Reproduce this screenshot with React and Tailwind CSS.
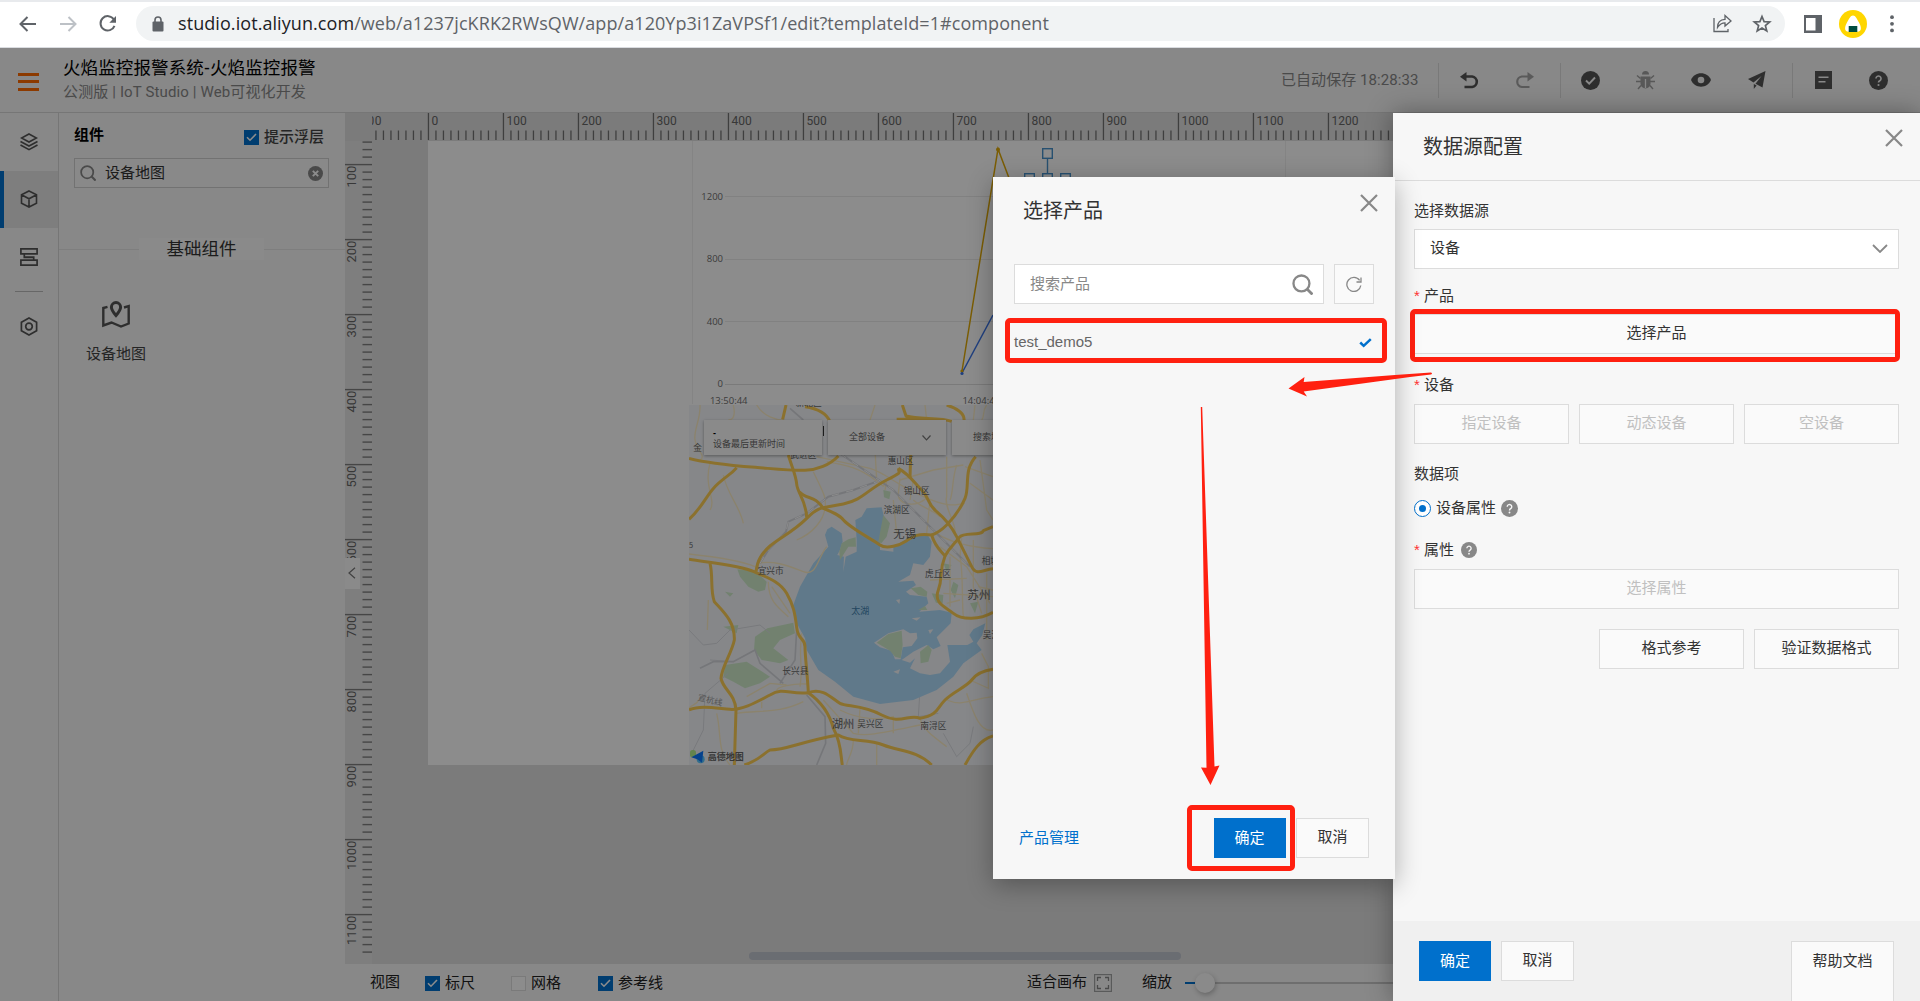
import React from "react";

const UI = "font-['Liberation_Sans','Noto_Sans_CJK_SC',sans-serif]";

/* ---------- icons ---------- */
function Close({ className = "" }) {
  return (
    <svg className={className} width="18" height="18" viewBox="0 0 18 18" fill="none" stroke="#888" strokeWidth="2.200">
      <path d="M1 1l16 16M17 1L1 17" />
    </svg>
  );
}

function Search({ size = 16, width = 1.8, color = "#888" }) {
  return (
    <svg width={size} height={size} viewBox="0 0 20 20" fill="none" stroke={color} strokeWidth={width}>
      <circle cx="9" cy="9" r="7.6" />
      <path d="M14.5 14.5L19.5 19.5" strokeWidth={width * 1.2} />
    </svg>
  );
}

function Question({ size = 17, bg = "#888", fg = "#f7f7f7" }) {
  return (
    <svg className="shrink-0" width={size} height={size} viewBox="0 0 18 18" fill="none">
      <circle cx="9" cy="9" r="9" fill={bg} />
      <path d="M6.6 7.1a2.4 2.4 0 1 1 3.6 2.1c-.9.5-1.2.9-1.2 1.8" stroke={fg} strokeWidth="1.5" />
      <circle cx="9" cy="13.2" r="1" fill={fg} />
    </svg>
  );
}

function Check({ checked }) {
  return checked ? (
    <span className="flex size-[15px] shrink-0 items-center justify-center bg-[#0070cc]">
      <svg width="11" height="9" viewBox="0 0 11 9" fill="none" stroke="#fff" strokeWidth="1.6">
        <path d="M1 4.2L4 7.2L10 1" />
      </svg>
    </span>
  ) : (
    <span className="size-[15px] shrink-0 border border-[#dedede] bg-white" />
  );
}

/* ---------- browser bar ---------- */
function BrowserBar() {
  return (
    <div className="flex h-12 shrink-0 items-center border-b border-[#dadce0] bg-white shadow-[inset_0_2px_0_#e8eaed]">
      <div className="flex w-[136px] items-center pl-[18px]">
        <svg width="100" height="20" viewBox="0 0 100 20" fill="none" strokeWidth="2" stroke="#5f6368">
          <path d="M18 10H3M9.5 3L2.5 10L9.5 17" />
          <path d="M42 10H57M50.5 3L57.500 10L50.500 17" stroke="#bdc1c6" />
          <path d="M95.800 5.400A7.200 7.200 0 1 0 96.500 11.800" />
          <path d="M98 2V8.700H91.300Z" fill="#5f6368" stroke="none" />
        </svg>
      </div>
      <div className="flex h-[35px] w-[1649px] items-center rounded-full bg-[#f1f3f4] pl-4">
        <svg width="12" height="16" viewBox="0 0 12 16">
          <rect x="0.500" y="5.500" width="11" height="10" rx="1" fill="#5f6368" />
          <path d="M3 6V4a3 3 0 0 1 6 0v2" fill="none" stroke="#5f6368" strokeWidth="1.600" />
        </svg>
        <div className="ml-[14px] w-[1500px] whitespace-nowrap font-['Open_Sans','Noto_Sans',sans-serif] text-[18px] tracking-[0.07px] text-[#5f6368]">
          <span className="text-[#202124]">studio.iot.aliyun.com</span>
          /web/a1237jcKRK2RWsQW/app/a120Yp3i1ZaVPSf1/edit?templateId=1#component
        </div>
        <svg className="ml-[35px]" width="19" height="19" viewBox="0 0 19 19" fill="none" stroke="#5f6368" strokeWidth="1.300">
          <path d="M1 4V17.500H15V15" />
          <path d="M4.500 13.500C4.500 8.500 7 5.500 12 5.300V1.500L18 7L12 12V8.800C8.500 8.800 6.500 10.500 4.500 13.500Z" />
        </svg>
        <svg className="ml-5" width="20" height="20" viewBox="0 0 20 20" fill="none" stroke="#5f6368" strokeWidth="1.700">
          <path d="M10 2.500L12.100 7.600L17.700 8L13.400 11.600L14.800 17L10 14L5.200 17L6.600 11.600L2.300 8L7.900 7.600Z" />
        </svg>
      </div>
      <svg className="ml-[19px]" width="18" height="18" viewBox="0 0 18 18">
        <path d="M0 0H18V18H0ZM2 3V15.500H11.500V3Z" fill="#5f6368" fillRule="evenodd" />
      </svg>
      <svg className="ml-[17px]" width="28" height="28" viewBox="0 0 28 28">
        <circle cx="14" cy="14" r="14" fill="#ffd600" />
        <path d="M14 5.500C16.500 5.500 18 9 20 12.500C22.500 17 23 21.500 18.500 21.800H9.500C5 21.500 5.500 17 8 12.500C10 9 11.500 5.500 14 5.500Z" fill="#fff" />
        <rect x="9.700" y="16" width="8.600" height="6" fill="#004d40" />
      </svg>
      <svg className="ml-[23px]" width="4" height="18" viewBox="0 0 4 18" fill="#5f6368">
        <circle cx="2" cy="2.200" r="1.900" />
        <circle cx="2" cy="8.800" r="1.900" />
        <circle cx="2" cy="15.400" r="1.900" />
      </svg>
    </div>
  );
}

/* ---------- application header ---------- */
const Divider = ({ className = "" }) => <div className={"h-[35px] w-px shrink-0 bg-[#dcdcdc] " + className} />;

function Header() {
  return (
    <div className="flex h-[65px] shrink-0 items-center border-b border-[#d8d8d8] bg-[#f7f7f7]">
      <div className="ml-[18px] mt-[3px] flex w-[21px] flex-col gap-[4.500px]">
        <div className="h-[3px] bg-[#ff6a00]" />
        <div className="h-[3px] bg-[#ff6a00]" />
        <div className="h-[3px] bg-[#ff6a00]" />
      </div>
      <div className="ml-6 flex flex-col">
        <div className="h-[24px] text-[17.5px] leading-[24px] tracking-[0.12px] text-black">火焰监控报警系统-火焰监控报警</div>
        <div className="h-[24px] whitespace-nowrap font-['Roboto','Noto_Sans_CJK_SC',sans-serif] text-[15px] leading-[24px] tracking-[0.13px] text-[#888]">
          公测版 | IoT Studio | Web可视化开发
        </div>
      </div>
      <div className="ml-auto flex h-full items-center pr-8">
        <div className="w-[157px] whitespace-nowrap font-['Roboto','Noto_Sans_CJK_SC',sans-serif] text-[15px] tracking-[0.06px] text-[#888]">
          已自动保存 18:28:33
        </div>
        <Divider />
        <svg className="ml-[21px]" width="19" height="17" viewBox="0 0 19 17" fill="none">
          <path d="M6 4.500H12.200A5.300 5.300 0 0 1 12.200 15H4.500" stroke="#555" strokeWidth="2.600" />
          <path d="M0 4.700L6.500 0V9.400Z" fill="#555" />
        </svg>
        <svg className="ml-9" width="19" height="17" viewBox="0 0 19 17" fill="none">
          <path d="M13 4.500H6.800A5.300 5.300 0 0 0 6.800 15H14.500" stroke="#a5a5a5" strokeWidth="2.200" />
          <path d="M19 4.700L12.500 0V9.400Z" fill="#a5a5a5" />
        </svg>
        <Divider className="ml-[26px]" />
        <svg className="ml-[20px]" width="19" height="19" viewBox="0 0 19 19" fill="none">
          <circle cx="9.500" cy="9.500" r="9.500" fill="#555" />
          <path d="M5 9.500L8.200 12.700L14 6.500" stroke="#f7f7f7" strokeWidth="1.900" />
        </svg>
        <svg className="ml-9" width="19" height="19" viewBox="0 0 19 19" fill="#a0a0a0" stroke="#a0a0a0">
          <path d="M6 3.500a3.500 3.500 0 0 1 7 0z" stroke="none" />
          <path d="M4.500 5.500h10v7a5 5 0 0 1-10 0z" stroke="none" />
          <path d="M1 4.500L4.500 7.500M18 4.500L14.500 7.500M0 10.500H5M14 10.500H19M2 18L5 14.500M17 18L14 14.500" fill="none" strokeWidth="1.400" />
          <path d="M9.500 8V17" stroke="#f7f7f7" strokeWidth="1.300" />
        </svg>
        <svg className="ml-9" width="20" height="14" viewBox="0 0 20 14">
          <path d="M0 7C2 2.500 5.500 0.300 10 0.300S18 2.500 20 7C18 11.500 14.500 13.700 10 13.700S2 11.500 0 7Z" fill="#555" />
          <circle cx="10" cy="7" r="3.300" fill="#f7f7f7" />
        </svg>
        <svg className="ml-[37px]" width="18" height="18" viewBox="0 0 18 18" fill="#555">
          <path d="M17.500 0L0 8L5.500 11.500L13.500 5L7.500 12.800L14.500 16.500Z" />
          <path d="M5.800 13V18L8.600 14.600Z" />
        </svg>
        <Divider className="ml-[26px]" />
        <svg className="ml-[22px]" width="17" height="18" viewBox="0 0 17 18">
          <rect width="17" height="18" fill="#555" />
          <path d="M3.500 6.300H13.500M3.500 10.700H10.500" stroke="#f7f7f7" strokeWidth="1.500" />
        </svg>
        <div className="ml-[37px]">
          <Question size={19} bg="#555" />
        </div>
      </div>
    </div>
  );
}

/* ---------- left navigation ---------- */
function NavRail() {
  return (
    <div className="flex w-[59px] shrink-0 flex-col border-r border-[#d8d8d8] bg-[#f7f7f7]">
      <div className="flex h-[58px] items-center justify-center">
        <svg width="18" height="18" viewBox="0 0 18 18" fill="none" stroke="#555" strokeWidth="1.600">
          <path d="M9 1L16.500 5L9 9L1.500 5Z" />
          <path d="M0.500 8.500L9 13L17.500 8.500M0.500 12L9 16.700L17.500 12" />
        </svg>
      </div>
      <div className="flex h-[57px] items-center justify-center border-l-4 border-[#0070cc] bg-[#e6e6e6] pb-0.5 pr-1">
        <svg width="18" height="18" viewBox="0 0 18 18" fill="none" stroke="#555" strokeWidth="1.600">
          <path d="M9 1L16.500 4.800V13.200L9 17L1.500 13.200V4.800ZM1.500 4.800L9 8.800L16.500 4.800M9 8.800V17" />
        </svg>
      </div>
      <div className="flex h-[58px] items-center justify-center">
        <svg width="18" height="18" viewBox="0 0 18 18" fill="none" stroke="#555" strokeWidth="1.700">
          <path d="M0.900 0.900H17.100V5.800H0.900ZM4.300 5.800V9.400H13.500M0.900 12.200H17.100V17.100H0.900ZM4.300 9H13.700V12.200" />
        </svg>
      </div>
      <div className="mx-auto mt-[5px] h-px w-7 bg-[#bcbcbc]" />
      <div className="mt-[25px] flex justify-center">
        <svg width="18" height="20" viewBox="0 0 18 20" fill="none" stroke="#555" strokeWidth="1.700">
          <path d="M9 1L16.600 5.200V13.800L9 18L1.400 13.800V5.200Z" />
          <circle cx="9" cy="9.500" r="3.300" />
        </svg>
      </div>
    </div>
  );
}

function ComponentPanel() {
  return (
    <div className="flex w-[286px] shrink-0 flex-col bg-[#f7f7f7] text-[15px] text-[#444]">
      <div className="flex h-[45px] items-center pl-[15px] pr-[21px]">
        <span className="font-bold text-black">组件</span>
        <span className="ml-auto mt-[3px] flex items-center gap-[5px] font-medium">
          <Check checked />
          提示浮层
        </span>
      </div>
      <div className="ml-[15px] flex h-[30px] w-[255px] items-center border border-[#d0d0d0] bg-[#fafafa] pl-[5px] pr-[5px] text-[#333]">
        <Search size={16} color="#888" width={2.200} />
        <span className="ml-[9px]">设备地图</span>
        <svg className="ml-auto" width="15" height="15" viewBox="0 0 15 15">
          <circle cx="7.500" cy="7.500" r="7.500" fill="#888" />
          <path d="M4.800 4.800L10.200 10.200M10.200 4.800L4.800 10.200" stroke="#fff" strokeWidth="1.900" />
        </svg>
      </div>
      <div className="mt-[50px] flex items-center">
        <div className="h-px w-20 bg-[#e6e6e6]" />
        <div className="flex h-[22px] w-[125px] items-center justify-center bg-[#fbfbfb] text-[17.5px] text-[#333]">基础组件</div>
        <div className="h-px flex-1 bg-[#e6e6e6]" />
      </div>
      <div className="mt-[41px] flex w-[114px] flex-col items-center">
        <svg width="28" height="28" viewBox="0 0 28 28" fill="none" stroke="#555" strokeWidth="2.400">
          <path d="M5.500 5.800L1.300 7V24.500L9.500 21.500L19 25.500L26.700 22.500V5.200L22 6.500" />
          <path d="M14 1.600A4.600 4.600 0 0 1 18.600 6.200C18.600 9 14 14.500 14 14.500S9.400 9 9.400 6.200A4.600 4.600 0 0 1 14 1.600Z" strokeWidth="3" />
        </svg>
        <span className="mt-[14px]">设备地图</span>
      </div>
    </div>
  );
}

/* ---------- rulers ---------- */
function TopRuler() {
  const ticks = Array.from({ length: 137 }, (_, i) => i - 7);
  return (
    <svg className="block" width="1021" height="28" viewBox="372 0 1021 28">
      {ticks.map((i) => (
        <rect key={i} x={427.800 + i * 7.500} y={i % 10 === 0 ? 0 : 17.500} width="1.300" height={i % 10 === 0 ? 27 : 9.500} fill="#747474" />
      ))}
      {Array.from({ length: 14 }, (_, i) => i - 1).map((n) => (
        <text key={n} x={n < 0 ? 356.500 : 431.500 + n * 75} y="12.300" fontSize="12" fill="#666" textLength={n < 0 ? 25 : undefined} className="font-['Roboto',sans-serif]">
          {n * 100}
        </text>
      ))}
    </svg>
  );
}

function SideRuler() {
  const ticks = Array.from({ length: 109 }, (_, i) => i + 7);
  return (
    <svg className="block" width="27" height="824" viewBox="345 141 27 824">
      {ticks.map((i) => (
        <rect key={i} x={i % 10 === 0 ? 345 : 362.500} y={88.900 + i * 7.500} width={i % 10 === 0 ? 27 : 9.500} height="1.400" fill="#808080" />
      ))}
      {Array.from({ length: 11 }, (_, i) => i + 1).map((n) => (
        <text key={n} transform={`translate(356.400 ${90.700 + n * 75}) rotate(-90)`} textAnchor="end" fontSize="13" fill="#666" className="font-['Roboto',sans-serif]">
          {n * 100}
        </text>
      ))}
    </svg>
  );
}

/* ---------- map ---------- */
const LABELS = [
  ["惠山区", 623, 193, 26], ["锡山区", 671, 281, 26], ["滨湖区", 611, 339, 26], ["无锡", 640, 415, 34],
  ["宜兴市", 233, 521, 26], ["虎丘区", 735, 530, 26], ["相城区", 905, 493, 26], ["苏州", 862, 596, 35],
  ["吴江区", 908, 713, 26], ["长兴县", 307, 821, 26], ["湖州", 455, 985, 34], ["吴兴区", 532, 982, 26],
  ["南浔区", 721, 988, 26], ["金", 40, 154, 26], ["武进区", 331, 173, 26], ["新北区", 347, 19, 26],
];

const MAJOR = [
  "M27 175C90 192 180 198 250 204S340 212 375 211S450 195 475 168",
  "M27 358C70 320 80 280 115 250S150 225 170 203",
  "M325 165C335 200 348 225 350 252S378 300 380 352",
  "M27 478C90 488 180 496 222 515S300 545 320 580S345 640 350 682S375 712 375 740S382 820 385 878",
  "M228 515C232 480 245 460 270 438S340 395 380 355S430 325 490 312S560 270 620 240S650 220 657 206",
  "M358 275C380 300 405 285 430 325C455 335 480 345 492 362C520 390 580 420 600 435S660 435 680 422S710 400 755 405C765 440 780 450 795 468C775 520 790 530 775 570S795 620 820 640S900 660 939 637",
  "M655 205C690 225 700 245 725 270S740 310 770 335S815 380 830 410S860 470 875 500S910 508 939 506",
  "M692 165L690 235",
  "M887 170C850 210 870 260 855 295S815 360 800 375S770 400 755 405",
  "M795 468C810 440 825 430 838 412S905 410 910 392L939 380",
  "M90 490C100 530 90 570 103 605C130 635 165 665 163 720C155 760 125 800 123 835C130 870 165 880 168 930L163 1095",
  "M27 930C60 915 110 925 150 928S240 900 270 885C310 860 330 885 385 878C430 910 450 945 460 985C485 1030 482 1070 487 1095",
  "M385 878C430 860 460 900 480 910S550 915 605 945S690 940 720 955C775 945 770 925 795 900S860 860 875 840S910 812 939 808",
  "M193 1095C240 1080 250 1060 270 1050C320 1050 360 1025 475 1005C510 1028 560 1015 610 1035S710 1050 755 1095",
  "M855 1095C880 1050 900 1020 939 1008",
  "M318 15L308 58M375 20C410 25 440 40 450 65M667 15L678 48C720 60 780 50 815 64M800 15C830 25 855 40 852 62M650 58H760",
];

const MINOR = [
  "M27 462C100 470 180 480 225 500", "M60 15C62 60 40 90 45 120S80 170 60 180", "M160 15C170 60 150 60 145 60M230 15C250 50 290 60 310 60",
  "M90 190C70 260 110 300 90 330", "M130 225C140 280 180 320 190 370", "M230 490C290 480 330 500 370 515S410 480 440 440",
  "M400 215C430 280 440 290 435 325S400 400 350 420", "M440 185C500 195 540 205 585 240S600 250 620 245", "M410 170L570 205C620 220 640 250 730 290S830 310 855 310",
  "M620 245L615 270M640 300L650 400M660 235L655 280C650 310 700 330 745 290M700 240L690 300",
  "M800 170V290C790 320 830 370 825 400M855 200L939 230M870 250L939 300M900 180L920 330L939 360M830 195C815 240 820 280 810 300",
  "M770 400C800 420 850 440 939 446M845 415L840 470C850 520 845 600 850 650M880 420V560L905 640M780 440L860 500L930 610",
  "M750 540L860 535M790 580L939 590M800 610L840 600M920 520V720M895 560L939 570M810 470V620",
  "M265 545C265 600 290 620 325 650M275 560L330 640M365 700C355 780 370 800 360 860",
  "M170 940C240 930 300 940 370 905M110 940C125 1000 110 1050 150 1095M290 872C290 860 340 850 380 852M245 905V925M60 895C50 915 35 915 27 925",
  "M430 900L520 1000C560 1010 600 1000 720 975M480 930C540 960 600 960 640 950V1000M540 925L535 1000M590 1030V1095M520 1020C520 1060 500 1080 500 1095",
  "M720 955C730 990 760 1010 800 1040M800 900C850 920 860 900 939 890M860 880C880 940 900 1000 939 990M870 840L925 865V800L905 760",
  "M570 60L585 15M590 240L580 60M740 60L735 15M880 60L885 15M920 15C905 35 915 50 905 60M700 300C720 320 760 330 780 350M750 300L740 400",
  "M85 600L82 690M200 890L270 850L320 855M660 240L760 210L850 195",
];

function MapView() {
  return (
    <svg className="absolute inset-0" width="304" height="360" viewBox="27 15 912 1080" fill="none">
      <rect x="27" y="15" width="912" height="1080" fill="#f4f6fa" />
      <g fill="#cfeccb">
        <path d="M172 508L225 512L260 545L255 570L235 575L205 560L180 530Z" />
        <path d="M225 710L262 685L340 668L345 700L300 720L280 745L325 780L300 790L245 780L222 750Z" />
        <path d="M135 795L200 785L270 830L240 850L195 865L160 845L130 830Z" />
        <path d="M130 680L175 675L170 700ZM135 575L160 580L150 590ZM610 270L632 275L628 298L612 292Z" />
        <path d="M790 490L815 495L800 515ZM820 545L835 555L825 595L812 570ZM755 580L790 585L788 610L768 608ZM870 610L895 605L885 640Z" />
      </g>
      <g stroke="#dcdee3" strokeWidth="3">
        <path d="M27 690L70 735L110 730L150 690L240 675L270 700M225 750L160 785L90 780M145 820L75 880L70 990L35 1060M720 870L715 950L775 940M790 1000L830 1070L870 1030L880 980" />
      </g>
      <path d="M435 405L442 388L455 380L485 400L488 425L480 450L472 465L492 470L490 515L497 470L530 455L530 420L526 360L545 350L560 325L605 322L612 350L600 410L600 450L640 455L640 440L700 405L740 400L755 425L750 470L730 495L700 490L690 525L655 545L700 542L708 555L678 575L690 585L740 590L745 610L718 635L780 630L815 638L812 670L770 712L782 738L760 748L740 735L700 755L665 780L690 788L705 775L690 805L720 820L750 825L780 820L810 785L802 735L862 735L880 725L868 705L880 688L916 670L907 705L890 730L905 750L850 790L820 830L770 870L700 900L600 912L520 890L465 845L415 810L380 750L375 715L350 670L338 620L360 560L400 490L445 440Z" fill="#b0ddfb" />
      <path d="M582 728L625 700L670 688L690 700L710 698L712 715L695 738L668 742L662 778L645 778L635 752L600 742Z" fill="#f4f6fa" />
      <g fill="#cfeccb">
        <path d="M590 728L625 702L665 692L668 735L662 775L645 770L630 752Z" />
        <path d="M720 755L745 735L755 750L745 785L722 790Z" />
        <path d="M478 455L485 430L505 418L527 412L528 440L505 440L480 480ZM610 345L630 370L620 410L604 430L595 425Z" />
        <path d="M692 565L722 560L742 575L740 590L715 585ZM715 630L735 618L742 630Z" />
      </g>
      <path d="M648 600L660 598L658 612ZM745 690L760 688L750 702ZM695 655L722 652L710 662ZM640 815L660 808L655 822Z" fill="#f4f6fa" />
      <g stroke="#fdeec6" strokeWidth="4">
        {MINOR.map((d) => <path key={d} d={d} />)}
      </g>
      <g stroke="#d6d8dd" strokeWidth="6">
        <path d="M480 160L640 270L760 390L870 500M240 490L265 450L318 395L325 365L380 340L445 290L520 270L590 245" />
        <path d="M60 805L100 785L160 785L225 750L240 790L310 850M380 885L435 950L437 1030L410 1095M350 690L345 780L300 850M330 25L370 60" strokeWidth="5" />
      </g>
      <g stroke="#fff" strokeWidth="3" strokeDasharray="22 22">
        <path d="M480 160L640 270L760 390L870 500M240 490L265 450L318 395L325 365L380 340L445 290L520 270L590 245" />
      </g>
      <g stroke="#fdce55" strokeWidth="9" strokeLinejoin="round">
        {MAJOR.map((d) => <path key={d} d={d} />)}
      </g>
      <g fill="#666" className="font-['Noto_Sans_CJK_SC',sans-serif]">
        {LABELS.map(([t, x, y, s]) => (
          <text key={t} x={x} y={y} fontSize={s}>{t}</text>
        ))}
        <text x="27" y="443" fontSize="22">5</text>
        <text x="514" y="643" fontSize="27" fill="#3f7fae">太湖</text>
        <text transform="translate(52 900) rotate(14)" fontSize="25" fill="#999">宣杭线</text>
      </g>
      <rect x="30" y="1050" width="18" height="22" rx="8" fill="#b4f08c" />
      <circle cx="62" cy="1078" r="12" fill="#5cc8ff" />
      <path d="M34 1072L70 1052L66 1088L52 1078Z" fill="#0a78ff" />
      <text x="83" y="1081" fontSize="27" fontWeight="700" fill="#666" className="font-['Noto_Sans_CJK_SC',sans-serif]">高德地图</text>
    </svg>
  );
}

function MapWidget() {
  return (
    <div className="absolute left-[261px] top-[264px] h-[360px] w-[304px] overflow-hidden">
      <MapView />
      <div className="relative flex gap-[6.500px] pl-[15px] pt-[15px] text-[9px] text-[#666]">
        <div className="flex h-[35px] w-[117.500px] shrink-0 flex-col justify-center bg-[#fbfbfb] pl-[9px] pt-0.5 leading-[11px] shadow-[0_1px_3px_rgba(0,0,0,0.35)]">
          <div className="font-bold text-black">-</div>
          <div>设备最后更新时间</div>
        </div>
        <div className="flex h-[35px] w-[117.500px] shrink-0 items-center bg-[#fbfbfb] pl-[21px] pt-px shadow-[0_1px_3px_rgba(0,0,0,0.35)]">
          全部设备
          <svg className="ml-[37px]" width="9" height="6" viewBox="0 0 9 6" fill="none" stroke="#777" strokeWidth="1.200"><path d="M0.500 0.500L4.500 4.800L8.500 0.500" /></svg>
        </div>
        <div className="flex h-[35px] w-[117.500px] shrink-0 items-center bg-[#fbfbfb] pl-[21px] shadow-[0_1px_3px_rgba(0,0,0,0.35)]">搜索地点</div>
      </div>
      <div className="absolute left-[133.500px] top-[21px] h-[10px] w-px bg-[#333]" />
    </div>
  );
}

function ChartWidget() {
  return (
    <svg className="absolute left-[261px] top-0" width="704" height="270" viewBox="689 141 704 270" fill="none">
      <path d="M692.500 141V404M1285.500 141V404" stroke="#f0f0f0" />
      <path d="M725 196.500H993M725 259.500H993M725 321.500H993" stroke="#ececec" />
      <path d="M725 384.500H993" stroke="#dedede" />
      <g fontSize="9.500" fill="#707070" textAnchor="end" className="font-['Open_Sans',sans-serif]">
        <text x="723" y="199.500">1200</text>
        <text x="723" y="262">800</text>
        <text x="723" y="324.500">400</text>
        <text x="723" y="387">0</text>
        <text x="747.500" y="403.500">13:50:44</text>
        <text x="1000" y="403.500">14:04:44</text>
      </g>
      <path d="M962 373L993 315" stroke="#3a74e8" strokeWidth="1.500" />
      <path d="M962 371L998 149L1009 178" stroke="#e0aa08" strokeWidth="1.500" />
      <circle cx="962" cy="371" r="1.600" fill="#e0aa08" />
      <circle cx="962" cy="373.500" r="1.600" fill="#3a74e8" />
      <circle cx="998" cy="149.500" r="2" fill="#e0aa08" />
      <g stroke="#4893cc" strokeWidth="1.400" fill="#fff">
        <path d="M1047.500 158V174" />
        <rect x="1042.700" y="148.700" width="9.600" height="9.600" />
        <rect x="1024.700" y="173.700" width="9.600" height="9.600" />
        <rect x="1042.700" y="173.700" width="9.600" height="9.600" />
        <rect x="1060.700" y="173.700" width="9.600" height="9.600" />
      </g>
    </svg>
  );
}

function BottomBar() {
  return (
    <div className="flex h-[37px] shrink-0 items-center bg-[#f7f7f7] pl-[25px] text-[15px] text-[#222]">
      <span className="w-[55px]">视图</span>
      <span className="flex w-[86px] items-center gap-[5px] pt-0.5"><Check checked />标尺</span>
      <span className="flex w-[87px] items-center gap-[5px] pt-0.5"><Check />网格</span>
      <span className="flex items-center gap-[5px] pt-0.5"><Check checked />参考线</span>
      <span className="ml-[364px] flex items-center gap-[7px]">
        适合画布
        <svg width="18" height="18" viewBox="0 0 18 18" fill="none">
          <rect x="0.600" y="0.600" width="16.800" height="16.800" stroke="#a2a4a4" strokeWidth="1.200" />
          <path d="M3.500 7V3.500H7M11 3.500H14.500V7M14.500 11V14.500H11M7 14.500H3.500V11" stroke="#888" strokeWidth="1.300" />
        </svg>
      </span>
      <span className="ml-[30px] w-[43px]">缩放</span>
      <div className="h-0.5 w-[10px] bg-[#0070cc]" />
      <div className="z-10 size-5 shrink-0 rounded-full bg-[#fbfbfb] shadow-[1px_2px_5px_rgba(0,0,0,0.25)]" />
      <div className="h-0.5 flex-1 bg-[#c8c8c8]" />
    </div>
  );
}

function Workspace() {
  return (
    <div className="flex min-w-0 flex-1 flex-col bg-[#e0e0e0]">
      <div className="flex h-[28px] shrink-0 pl-[27px]">
        <TopRuler />
      </div>
      <div className="flex min-h-0 flex-1">
        <div className="relative w-[27px] shrink-0 overflow-hidden bg-[#e6e6e6]">
          <SideRuler />
          <div className="absolute left-0 top-[417px] flex h-[31px] w-[15px] items-center justify-center bg-[#fcfcfc] pb-px pr-0.5">
            <svg width="8" height="12" viewBox="0 0 8 12" fill="none" stroke="#777" strokeWidth="1.200"><path d="M7 0.700L1 6L7 11.300" /></svg>
          </div>
        </div>
        <div className="relative min-w-0 flex-1 pl-[56px]">
          <div className="relative h-[624px] bg-white">
            <ChartWidget />
            <MapWidget />
          </div>
          <div className="absolute bottom-[4px] left-[377px] h-2 w-[432px] rounded-full bg-[#c1c6d0]" />
        </div>
      </div>
      <BottomBar />
    </div>
  );
}

/* ---------- dialogs ---------- */
const BTN = "flex h-10 shrink-0 items-center justify-center border border-[#dcdcdc] bg-[#fafafa] pb-px text-[15px] text-[#333]";
const BTN_OFF = "flex h-10 shrink-0 items-center justify-center border border-[#dcdcdc] bg-[#fafafa] pb-px text-[15px] text-[#c0c0c0]";
const BTN_OK = "flex h-10 w-[72px] shrink-0 items-center justify-center bg-[#0070cc] text-[15px] text-white";

function Label({ children, required }) {
  return (
    <div className="flex h-[22px] items-center text-[15px] text-[#333]">
      {required && <span className="w-[10px] text-[15px] text-[#ff3333]">*</span>}
      {children}
    </div>
  );
}

function Drawer() {
  return (
    <div className="absolute bottom-0 right-0 top-[113px] flex w-[527px] flex-col bg-[#f7f7f7] shadow-[0_0_24px_rgba(0,0,0,0.35)]">
      <div className="flex h-[68px] shrink-0 items-center border-b border-[#dcdcdc] pl-[30px] pr-[17px]">
        <span className="text-[20px] text-[#333]">数据源配置</span>
        <Close className="mb-[17px] ml-auto" />
      </div>
      <div className="flex flex-1 flex-col pl-[21px] pr-[21px] pt-[19px]">
        <Label>选择数据源</Label>
        <div className="mt-[7px] flex h-10 items-center border border-[#dcdcdc] bg-white px-[15px] pb-px text-[15px] text-[#333]">
          设备
          <svg className="-mr-[5px] ml-auto" width="16" height="9" viewBox="0 0 16 9" fill="none" stroke="#888" strokeWidth="1.800"><path d="M1 1L8 8L15 1" /></svg>
        </div>
        <div className="mt-4"><Label required>产品</Label></div>
        <div className="relative mt-[7px]">
          <div className={BTN}>选择产品</div>
          <div className="absolute -bottom-2 -left-1 -right-px -top-[5px] rounded-[5px] border-[5px] border-[#ff2010]" />
        </div>
        <div className="mt-5"><Label required>设备</Label></div>
        <div className="mt-2 grid grid-cols-3 gap-[10px]">
          <div className={BTN_OFF}>指定设备</div>
          <div className={BTN_OFF}>动态设备</div>
          <div className={BTN_OFF}>空设备</div>
        </div>
        <div className="mt-[19px]"><Label>数据项</Label></div>
        <div className="mt-3 flex h-[22px] items-center text-[15px] text-[#333]">
          <span className="flex size-[17px] items-center justify-center rounded-full border border-[#0070cc] bg-white">
            <span className="size-[7px] rounded-full bg-[#0070cc]" />
          </span>
          <span className="ml-[5px] mr-[5px]">设备属性</span>
          <Question />
        </div>
        <div className="mt-5 flex items-center gap-[7px]"><Label required>属性</Label><Question size={16} /></div>
        <div className={"mt-2 " + BTN_OFF}>选择属性</div>
        <div className="mt-5 flex justify-end gap-[10px]">
          <div className={"w-[145px] " + BTN}>格式参考</div>
          <div className={"w-[145px] " + BTN}>验证数据格式</div>
        </div>
      </div>
      <div className="flex h-20 shrink-0 items-start overflow-hidden bg-[#f0f0f0] pl-[26px] pr-[26px] pt-5">
        <div className={BTN_OK}>确定</div>
        <div className={"ml-[10px] w-[73px] " + BTN}>取消</div>
        <div className="ml-auto h-[61px] w-[103px] border border-[#dcdcdc] bg-[#fafafa] pt-[8px] text-center text-[15px] text-[#333]">帮助文档</div>
      </div>
    </div>
  );
}

function ProductDialog() {
  return (
    <div className="absolute left-[993px] top-[177px] flex h-[702px] w-[402px] flex-col bg-[#f7f7f7] pl-[21px] pr-[21px] shadow-[0_6px_24px_rgba(0,0,0,0.3)]">
      <div className="flex h-[87px] items-start pl-[9px]">
        <span className="mt-[19px] text-[20px] text-[#333]">选择产品</span>
        <Close className="-mr-[4px] ml-auto mt-[16.500px]" />
      </div>
      <div className="flex gap-[10px]">
        <div className="flex h-10 w-[310px] items-center border border-[#dcdcdc] bg-white pl-[15px] pr-[10px] text-[15px] text-[#888]">
          搜索产品
          <span className="ml-auto"><Search size={21} width={2.200} /></span>
        </div>
        <div className="flex size-10 items-center justify-center border border-[#dcdcdc] bg-[#fafafa]">
          <svg width="16" height="16" viewBox="0 0 16 16" fill="none" stroke="#888" strokeWidth="1.300">
            <path d="M13.600 4.400A7 7 0 1 0 14.800 9.500M15 1.500V6H10.500" />
          </svg>
        </div>
      </div>
      <div className="relative -ml-[9px] -mr-[13px] mt-[14px] flex h-[45px] shrink-0 items-center justify-between rounded-[5px] border-[5px] border-[#ff2010] pl-1 pr-[10px] pt-1 text-[15px] text-[#666]">
        test_demo5
        <svg width="13" height="10" viewBox="0 0 14 11" fill="none" stroke="#0070cc" strokeWidth="2.800"><path d="M1.200 5L5 8.600L12.800 1.200" /></svg>
      </div>
      <div className="mb-2 mt-auto flex h-[66px] items-center justify-between">
        <span className="pl-[5px] text-[15px] text-[#0070cc]">产品管理</span>
        <div className="-mr-[-5px] flex w-[182px] items-center justify-between">
          <div className="flex h-[66px] w-[108px] items-center rounded-[5px] border-[5px] border-[#ff2010] pl-[21.500px]">
            <div className={BTN_OK}>确定</div>
          </div>
          <div className={"w-[73px] " + BTN}>取消</div>
        </div>
      </div>
    </div>
  );
}

function Arrows() {
  return (
    <svg className="pointer-events-none absolute left-[1190px] top-[360px]" width="250" height="430" viewBox="1190 360 250 430" fill="#ff2010">
      <path d="M1288.500 388.500L1304.500 377L1303.700 382L1395 375L1431 372.500Q1433 373.500 1431 374.500L1410 377L1303.700 391.500L1307 396.500Z" />
      <path d="M1200.800 407H1202.200L1214.500 766.500L1219.500 765.500L1210.500 785L1201 767.500L1206.500 767.800Z" />
    </svg>
  );
}

export default function App() {
  return (
    <div className={"relative flex h-[1001px] w-[1920px] flex-col overflow-hidden bg-white " + UI}>
      <BrowserBar />
      <div className="relative flex min-h-0 flex-1 flex-col">
        <Header />
        <div className="flex min-h-0 flex-1">
          <NavRail />
          <ComponentPanel />
          <Workspace />
        </div>
        <div className="absolute inset-0 z-20 bg-black/45" />
      </div>
      <div className="absolute inset-x-0 bottom-0 top-12 z-30 overflow-hidden">
        <div className="absolute inset-x-0 -top-12 bottom-0">
          <Drawer />
          <ProductDialog />
          <Arrows />
        </div>
      </div>
    </div>
  );
}
